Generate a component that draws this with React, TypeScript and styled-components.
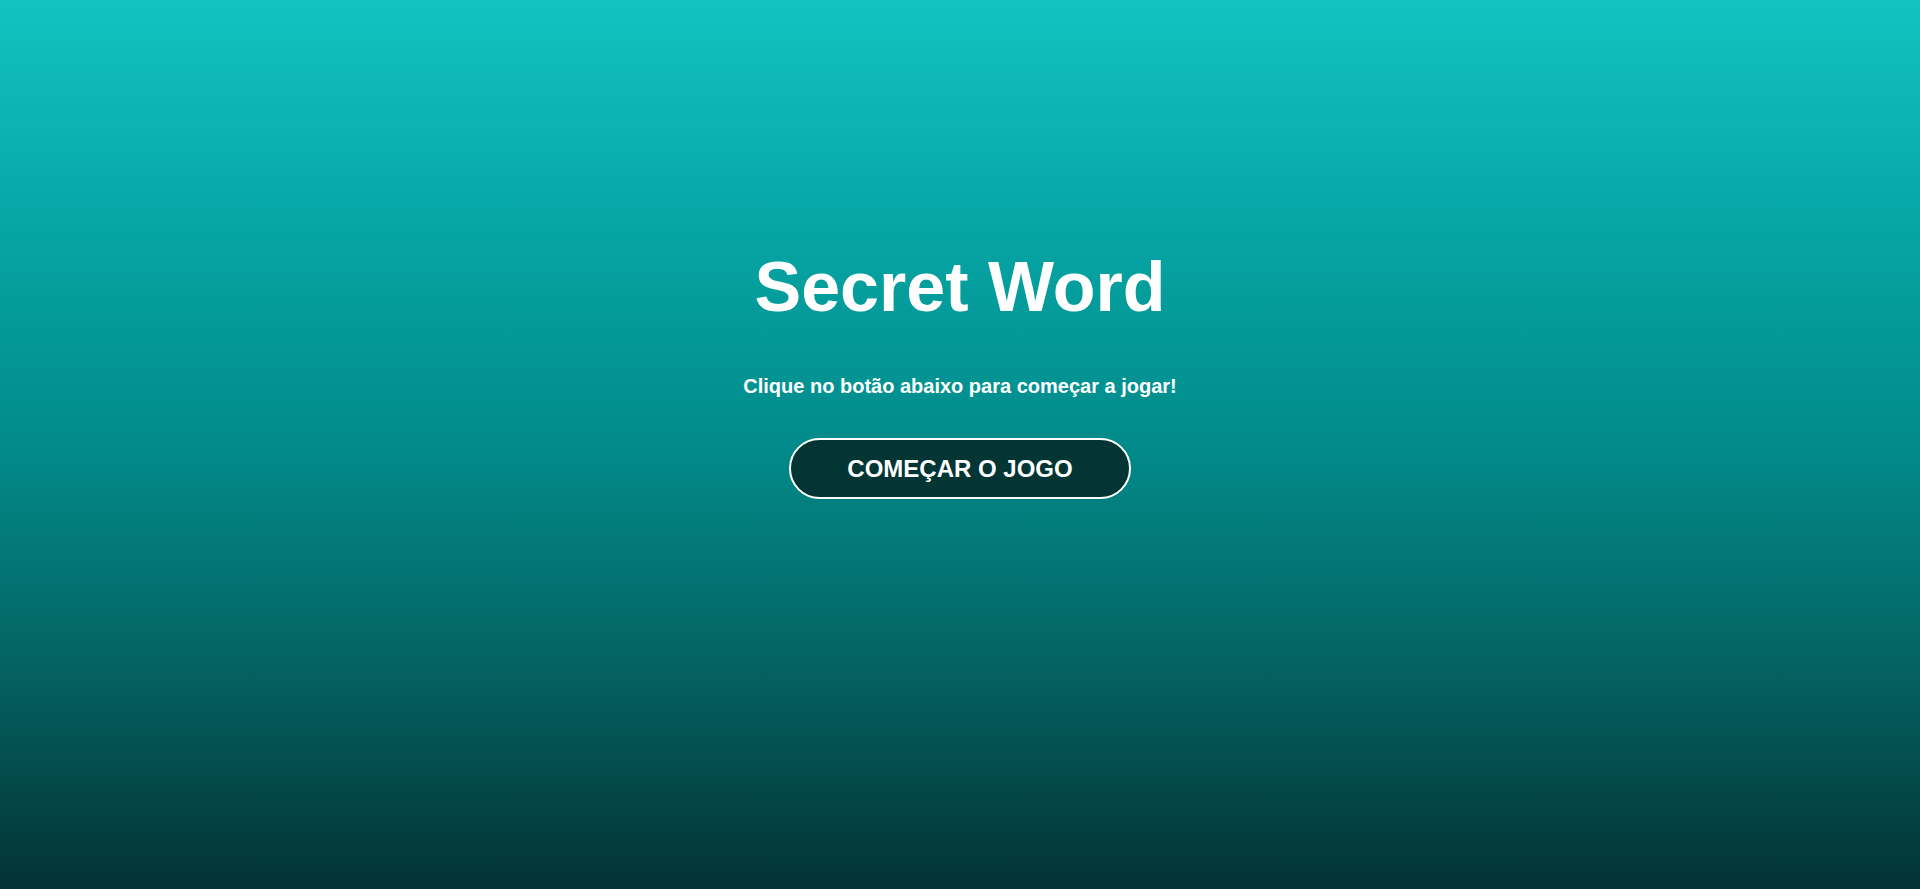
import React from "react";
import styled, { createGlobalStyle } from "styled-components";

const GlobalStyle = createGlobalStyle`
  * { box-sizing: border-box; }
  html, body { margin: 0; padding: 0; }
  body {
    font-family: "Liberation Sans", Arial, Helvetica, sans-serif;
    color: #fff;
  }
`;

const Page = styled.main`
  min-height: 100vh;
  display: flex;
  flex-direction: column;
  align-items: center;
  padding-top: 247px;
  background: linear-gradient(180deg, #12c3c1 0%, #06a6a5 25%, #018b8a 50%, #056262 75%, #033234 100%);
  text-align: center;
`;

const Title = styled.h1`
  margin: 0;
  font-size: 70px;
  line-height: 80px;
  font-weight: 700;
`;

const Subtitle = styled.p`
  margin: 47px 0 0;
  font-size: 20px;
  line-height: 24px;
  font-weight: 700;
`;

const StartButton = styled.button`
  margin-top: 40px;
  height: 61px;
  padding: 0 56px;
  border: 2px solid #fff;
  border-radius: 31px;
  background: #033535;
  color: #fff;
  font-family: inherit;
  font-size: 24px;
  font-weight: 700;
  text-transform: uppercase;
  cursor: pointer;
`;

export default function App() {
  return (
    <>
      <GlobalStyle />
      <Page>
        <Title>Secret Word</Title>
        <Subtitle>Clique no botão abaixo para começar a jogar!</Subtitle>
        <StartButton>Começar o jogo</StartButton>
      </Page>
    </>
  );
}
